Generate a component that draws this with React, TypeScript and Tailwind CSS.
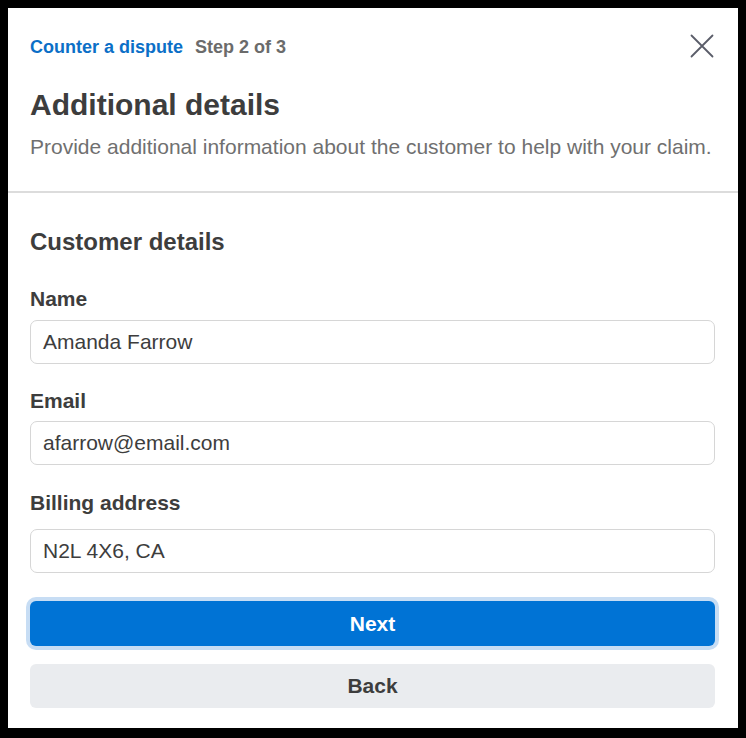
const Field = ({ label, value, className }: { label: string; value: string; className: string }) => (
  <div className={`flex flex-col ${className}`}>
    <label className="text-[21px] font-bold text-[#3d3d3d] leading-[24px]">{label}</label>
    <div className="h-[44px] rounded-[7px] border border-[#d6d6d6] bg-white px-3 flex items-center text-[21px] text-[#3d3d3d]">
      {value}
    </div>
  </div>
);

export default function App() {
  return (
    <div className="w-[746px] h-[738px] bg-black pt-2 pl-2 font-['Liberation_Sans',Arial,sans-serif]">
      <div className="w-[730px] h-[720px] bg-white flex flex-col">
        <header className="pl-[22px] pr-[23px] pt-[27px] pb-[31px] border-b-2 border-[#dcdcdc]">
          <div className="flex items-center justify-between">
            <div className="flex items-center gap-[12px] text-[18px] font-bold leading-[24px]">
              <span className="text-[#0b6fc7]">Counter a dispute</span>
              <span className="text-[#6b6b6b]">Step 2 of 3</span>
            </div>
            <svg width="24" height="24" viewBox="0 0 24 24" className="mr-[1px] -mt-[3px]" fill="none" stroke="#5a5d69" strokeWidth="1.8" strokeLinecap="round">
              <path d="M1.5 1.5 L22.5 22.5 M22.5 1.5 L1.5 22.5" />
            </svg>
          </div>
          <h1 className="mt-[28px] text-[30px] font-bold text-[#3d3d3d] leading-[36px]">Additional details</h1>
          <p className="mt-[11px] text-[21px] text-[#707070] leading-[26px]">
            Provide additional information about the customer to help with your claim.
          </p>
        </header>
        <main className="pl-[22px] pr-[23px] pt-[34px] flex flex-col">
          <h2 className="text-[24px] font-bold text-[#3d3d3d] leading-[30px] mb-[30px]">Customer details</h2>
          <Field label="Name" value="Amanda Farrow" className="gap-[9px]" />
          <Field label="Email" value="afarrow@email.com" className="mt-[25px] gap-[8px]" />
          <Field label="Billing address" value="N2L 4X6, CA" className="mt-[26px] gap-[14px]" />
          <button className="mt-[28px] h-[45px] rounded-[6px] bg-[#0073d5] text-white text-[21px] font-bold ring-4 ring-[#c7ddf4]">
            Next
          </button>
          <button className="mt-[18px] h-[44px] rounded-[6px] bg-[#eaecef] text-[#3d3d3d] text-[21px] font-bold">
            Back
          </button>
        </main>
      </div>
    </div>
  );
}
